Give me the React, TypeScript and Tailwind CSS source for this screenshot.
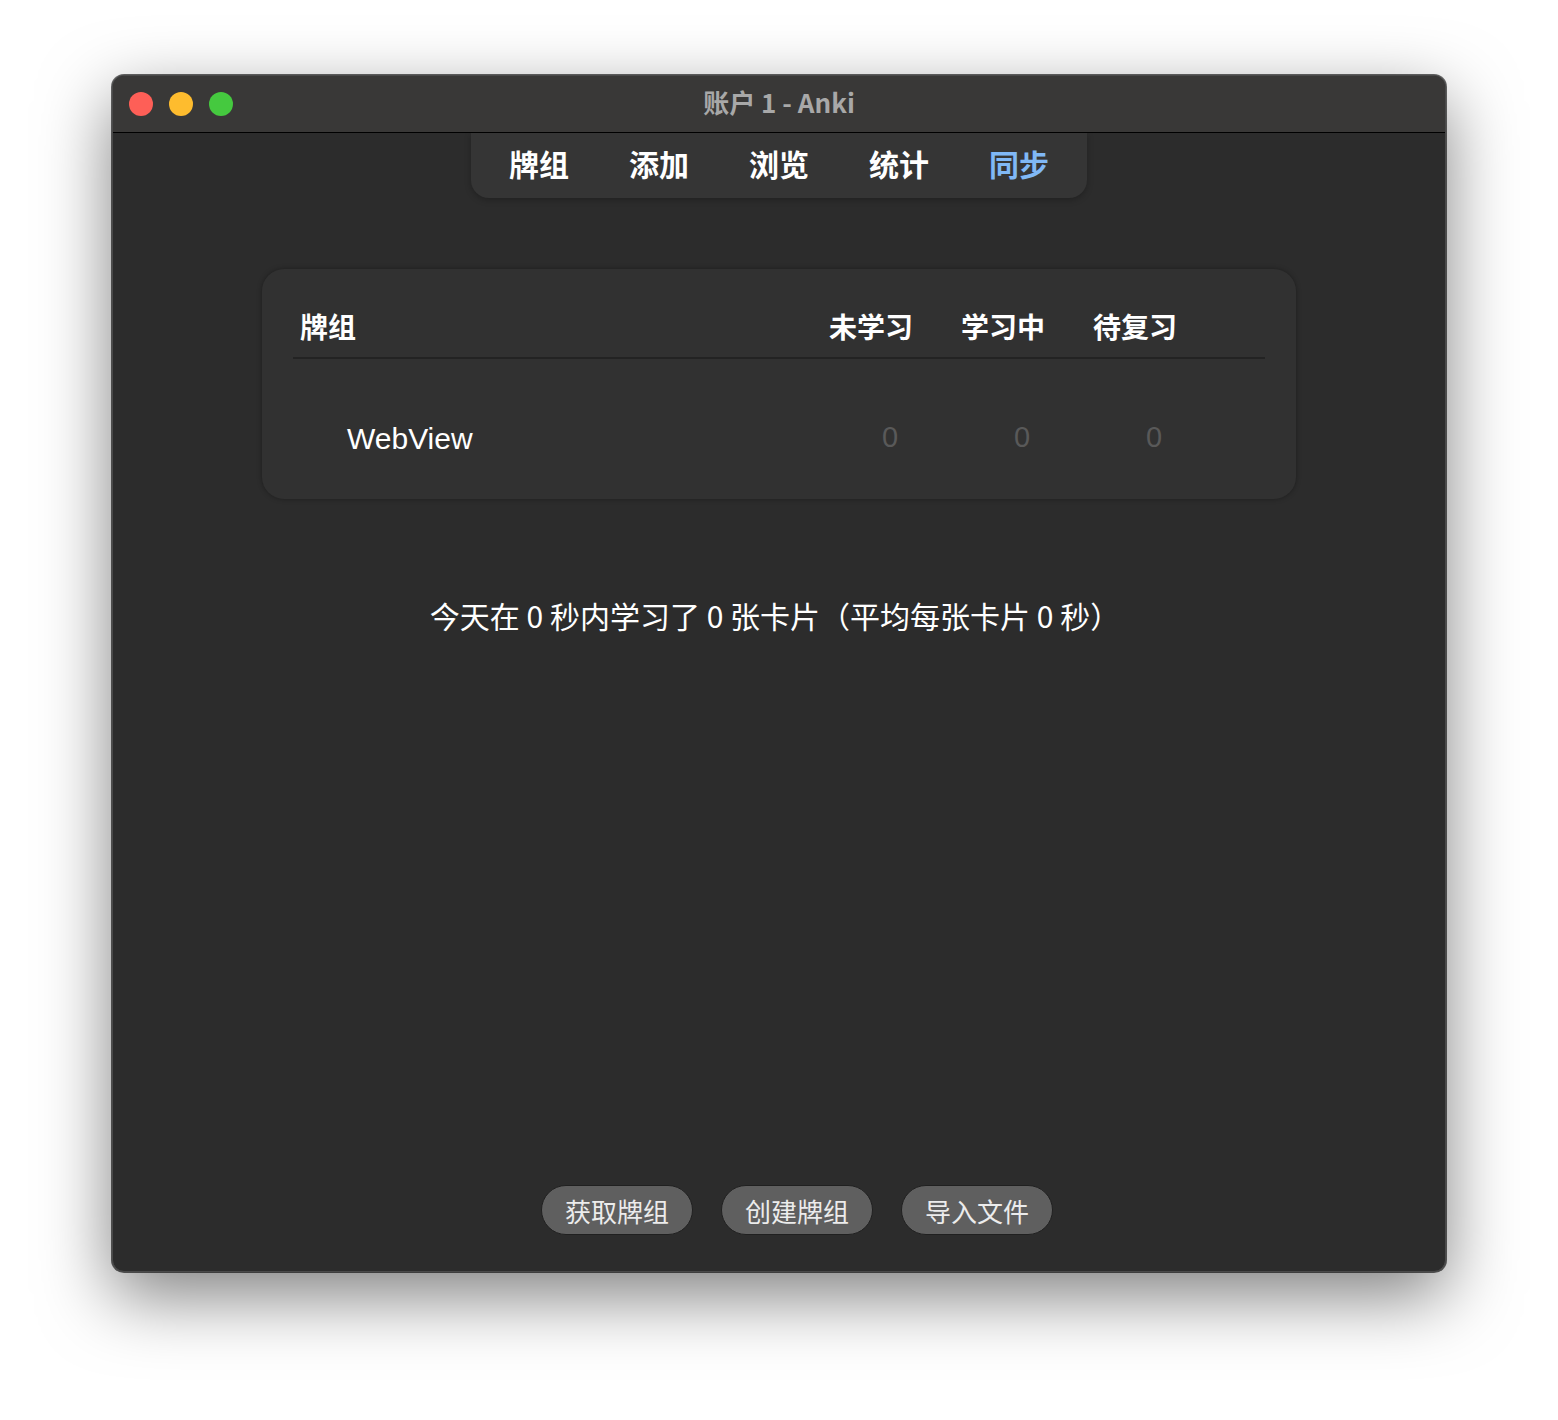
const cjk = { fontFamily: '"Noto Sans CJK SC", "Liberation Sans", sans-serif' };
const latin = { fontFamily: '"Liberation Sans", "Noto Sans CJK SC", sans-serif' };

const tabs = [
  { label: '牌组', active: false },
  { label: '添加', active: false },
  { label: '浏览', active: false },
  { label: '统计', active: false },
  { label: '同步', active: true },
];

const columns = ['未学习', '学习中', '待复习'];
const actions = ['获取牌组', '创建牌组', '导入文件'];

function TrafficLights() {
  return (
    <div className="flex items-center gap-4 pl-[16px]">
      <span className="size-6 rounded-full bg-[#fe5f57]" />
      <span className="size-6 rounded-full bg-[#febc2e]" />
      <span className="size-6 rounded-full bg-[#45c93f]" />
    </div>
  );
}

export default function App() {
  return (
    <div className="w-[1558px] h-[1420px] bg-white pt-[75px] pl-[112px]" style={cjk}>
      <div className="w-[1334px] h-[1197px] rounded-[12px] overflow-hidden flex flex-col bg-[#2c2c2c] border border-[#4a4a4a] shadow-[0_0_0_1px_rgba(0,0,0,0.6),0_24px_70px_rgba(0,0,0,0.5)]">
        <header className="relative h-[57px] shrink-0 flex items-center bg-[#393837] border-b border-black">
          <TrafficLights />
          <div className="absolute inset-0 pb-[6px] flex items-center justify-center text-[26px] font-bold text-[#a8a8a8]">
            账户 1 - Anki
          </div>
        </header>

        <main className="flex-1 flex flex-col items-center">
          <nav className="flex gap-[60px] px-[38px] pb-[6px] h-[65px] items-center bg-[#353535] rounded-b-[18px] shadow-[0_2px_6px_rgba(0,0,0,0.25)]">
            {tabs.map((t) => (
              <span
                key={t.label}
                className={`text-[30px] font-bold leading-none ${t.active ? 'text-[#80b8f6]' : 'text-white'}`}
              >
                {t.label}
              </span>
            ))}
          </nav>

          <section className="mt-[71px] w-[1034px] h-[230px] rounded-[22px] bg-[#313131] shadow-[0_0_5px_rgba(0,0,0,0.35)] px-[31px]">
            <div className="flex items-end h-[90px] pb-[17px] border-b-2 border-[#232323]">
              <div className="flex-1 pl-[7px] text-[28px] font-bold text-white leading-none">牌组</div>
              {columns.map((c) => (
                <div key={c} className="w-[132px] text-center text-[28px] font-bold text-white leading-none">
                  {c}
                </div>
              ))}
              <div className="w-[64px]" />
            </div>
            <div className="flex items-center h-[138px] pt-[20px]">
              <div className="flex-1 pl-[54px] text-[30px] text-white" style={latin}>
                WebView
              </div>
              {columns.map((c) => (
                <div key={c} className="w-[132px] pl-[38px] text-center text-[29px] text-[#595959]" style={latin}>
                  0
                </div>
              ))}
              <div className="w-[64px]" />
            </div>
          </section>

          <p className="mt-[94px] pr-[8px] text-[30px] text-white">
            今天在 0 秒内学习了 0 张卡片（平均每张卡片 0 秒）
          </p>

          <div className="mt-auto mb-[36px] pl-[36px] flex gap-[28px]">
            {actions.map((a) => (
              <button
                key={a}
                className="w-[152px] h-[50px] rounded-full bg-[#5f5f5f] border border-[#202020] text-[26px] text-[#ececec] flex items-center justify-center"
              >
                {a}
              </button>
            ))}
          </div>
        </main>
      </div>
    </div>
  );
}
